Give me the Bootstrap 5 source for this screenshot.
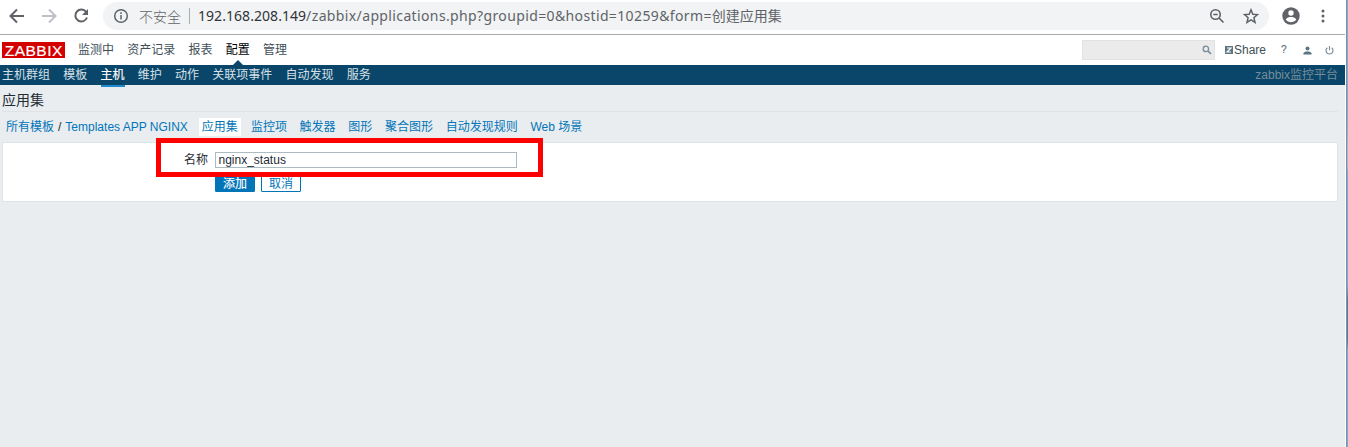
<!DOCTYPE html>
<html lang="zh-CN">
<head>
<meta charset="utf-8">
<title>应用集</title>
<link href="https://cdn.jsdelivr.net/npm/bootstrap@5.3.0/dist/css/bootstrap.min.css" rel="stylesheet">
<style>
body{font:12px/18px "Liberation Sans","Noto Sans CJK SC",sans-serif;color:#1f2c33;background:#fff;height:447px;overflow:hidden}
a{text-decoration:none;color:inherit;white-space:nowrap}
svg{display:block;flex:none}
.desk-edge{width:2px;background:linear-gradient(#8fa8c4 0,#8fa8c4 110px,#b3b3bd 150px,#b3b3bd 168px,#8aa6c8 171px,#8aa6c8 285px,#5c7d96 300px,#5c7d96 340px,#8aa6c8 350px);border-left:1px solid #7592b5}
.chrome-bar{height:35px;border-bottom:1px solid #aaa;padding-top:2px}
.nav-icons{width:103px;height:28px;padding-left:8px;gap:14px}
.omnibox{width:1166px;height:28px;border-radius:14px;background:#f1f3f4;color:#5f6368;font:14px/28px "Noto Sans","Noto Sans CJK SC",sans-serif;padding:0 10px}
.insecure{margin-left:10px;width:42px;font-family:"Noto Sans CJK SC",sans-serif;font-weight:300}
.divider{width:1px;height:16px;background:#aaadb1;margin:0 8px 0 8px}
.url{white-space:nowrap;letter-spacing:.37px}
.url b{font-weight:400;color:#303338;letter-spacing:.05px}
.url i{font-style:normal;letter-spacing:0}
.top-nav{height:30px;padding:0 10px 0 2px;color:#3f4f58}
.brand{width:63px;height:16px;background:#d40000;color:#fff;font-size:15.5px;line-height:17px;letter-spacing:.5px;padding-left:.5px;text-align:center;margin-right:13px;-webkit-text-stroke:.2px #fff}
.menu{gap:13.25px}
.crumbs .menu{gap:12.7px}
.menu .current{color:#000;position:relative}
.top-nav .current::after{content:"";position:absolute;left:7px;bottom:-6px;border:5px solid transparent;border-top:0;border-bottom-color:#0a466a}
.search-box{width:133px;height:20px;background:#ebebeb;border:1px solid #e0e3e5;padding-right:2px}
.sub-nav{height:20px;background:#0a466a;color:#d5e1e8;padding:0 7px 0 2px;line-height:20px}
.sub-nav .current{color:#fff;height:22px;border-bottom:2px solid #1f89ce;-webkit-text-stroke:.15px}
.server{color:#768d99}
.work{background:#e9edf0;padding:0 7px 0 2px}
.page-title{font-size:14px;line-height:20px;height:27px;padding-top:5px;border-bottom:1px solid #dfe4e7;margin:0;font-weight:400}
.crumbs{padding:6px 0 6px 4px;height:30px;color:#0275b8}
.crumbs .active-tab{background:#fff;padding:0 3px;margin:0 10px 0 11px}
.form-box{height:60px;background:#fff;border:1px solid #dfe4e7;padding:8px 0 0 181px}
.field-label{width:31px}
.name-field{width:302px;height:16px;border:1px solid #acbbc2;border-radius:0;padding:0 2.5px;font:12px/14px "Liberation Sans",sans-serif;color:#1f2c33;min-height:0}
.actions{margin:6px 0 0 31px;gap:6px}
.zbtn{width:40px;height:17px;border:1px solid #0275b8;border-radius:1px;padding:1px 0 0;font-size:12px;line-height:14px;color:#0275b8;background:#fff}
.zbtn.main{background:#0275b8;color:#fff;-webkit-text-stroke:.15px}
.marker{position:absolute;left:153px;top:-5px;width:387px;height:39px;border:5px solid #f00}
</style>
</head>
<body>
<div class="d-flex h-100">
<div class="d-flex flex-column" style="width:1345px">
  <div class="chrome-bar d-flex">
    <div class="nav-icons d-flex align-items-center">
      <svg width="18" height="18" viewBox="0 0 18 18" fill="none" stroke="#5f6368" stroke-width="2"><path d="M16 9H3M9 2.5 2.5 9 9 15.500"/></svg>
      <svg width="18" height="18" viewBox="0 0 18 18" fill="none" stroke="#bdc1c6" stroke-width="2"><path d="M2 9h13M9 2.500 15.500 9 9 15.500"/></svg>
      <svg width="18" height="18" viewBox="0 0 18 18"><path d="M14.200 5A6 6 0 1 0 15 10.500" fill="none" stroke="#5f6368" stroke-width="2"/><path d="M16 2v6h-6z" fill="#5f6368"/></svg>
    </div>
    <div class="omnibox d-flex align-items-center">
      <svg width="16" height="16" viewBox="0 0 16 16" fill="none" stroke="#5f6368" stroke-width="1.500"><circle cx="8" cy="8" r="6.300"/><path d="M8 7v4.500M8 4.300v1.600"/></svg>
      <span class="insecure">不安全</span><span class="divider"></span>
      <span class="url"><b>192.168.208.149</b>/zabbix/applications.php?groupid=0&amp;hostid=10259&amp;form=<i>创建应用集</i></span>
      <div class="d-flex ms-auto" style="gap:18px">
        <svg width="16" height="16" viewBox="0 0 16 16" fill="none" stroke="#5f6368" stroke-width="1.600"><circle cx="6.500" cy="6.500" r="4.700"/><path d="M10 10l4.500 4.500M4.300 6.500h4.400"/></svg>
        <svg width="16" height="16" viewBox="0 0 16 16" fill="none" stroke="#5f6368" stroke-width="1.500"><path d="M8 1.800l1.800 4.400 4.700.4-3.600 3.100 1.100 4.600L8 11.800l-4 2.500 1.100-4.600-3.600-3.100 4.700-.4z"/></svg>
      </div>
    </div>
    <div class="d-flex align-items-center" style="height:28px;margin-left:13px;gap:15px">
      <svg width="18" height="18" viewBox="0 0 18 18"><circle cx="9" cy="9" r="8.700" fill="#5f6368"/><circle cx="9" cy="6" r="2.700" fill="#fff"/><path d="M3.700 12.500C5 10.500 7 10.100 9 10.100s4 .4 5.300 2.400C13 14.300 11 15.300 9 15.300s-4-1-5.300-2.800z" fill="#fff"/></svg>
      <svg width="16" height="16" viewBox="0 0 16 16" fill="#5f6368"><circle cx="8" cy="3" r="1.500"/><circle cx="8" cy="8" r="1.500"/><circle cx="8" cy="13" r="1.500"/></svg>
    </div>
  </div>
  <nav class="top-nav d-flex align-items-center">
    <a class="brand" href="#">ZABBIX</a>
    <div class="menu d-flex"><a href="#">监测中</a><a href="#">资产记录</a><a href="#">报表</a><a class="current" href="#">配置</a><a href="#">管理</a></div>
    <div class="search-box ms-auto d-flex align-items-center justify-content-end">
      <svg width="10" height="10" viewBox="0 0 10 10" fill="none" stroke="#768d99" stroke-width="1.300"><circle cx="3.900" cy="3.900" r="2.700"/><path d="M5.900 5.900 9 9" stroke-width="1.700"/></svg>
    </div>
    <a class="d-flex align-items-center" href="#" style="margin-left:10px;gap:1px"><svg width="8" height="8" viewBox="0 0 8 8"><path d="M0 0h8v8H0z" fill="#5c7583"/><path d="M2 2h4L2 6h4" fill="none" stroke="#fff" stroke-width="1.200"/></svg>Share</a>
    <a href="#" style="width:7px;margin-left:15px;color:#5c7583;font-size:10px;-webkit-text-stroke:.2px">?</a>
    <svg style="margin-left:15px" width="9" height="9" viewBox="0 0 9 9" fill="#5c7583"><circle cx="4.500" cy="2.500" r="2"/><path d="M.5 8.500V7.200C1 5.700 3 5.400 4.500 5.400s3.500.3 4 1.800v1.300z"/></svg>
    <svg style="margin:0 1px 0 13px" width="9" height="9" viewBox="0 0 9 9" fill="none" stroke="#768d99" stroke-width="1.100"><path d="M2.300 1.800a3.500 3.500 0 1 0 4.400 0M4.500 0v4.300"/></svg>
  </nav>
  <nav class="sub-nav d-flex">
    <div class="menu d-flex"><a href="#">主机群组</a><a href="#">模板</a><a class="current" href="#">主机</a><a href="#">维护</a><a href="#">动作</a><a href="#">关联项事件</a><a href="#">自动发现</a><a href="#">服务</a></div>
    <span class="server ms-auto">zabbix监控平台</span>
  </nav>
  <main class="work flex-grow-1">
    <h1 class="page-title">应用集</h1>
    <div class="crumbs d-flex">
      <a href="#">所有模板</a><span class="text-dark" style="margin:0 4px">/</span><a href="#">Templates APP NGINX</a>
      <a class="active-tab" href="#">应用集</a>
      <div class="menu d-flex"><a href="#">监控项</a><a href="#">触发器</a><a href="#">图形</a><a href="#">聚合图形</a><a href="#">自动发现规则</a><a href="#">Web 场景</a></div>
    </div>
    <form class="form-box position-relative">
      <div class="d-flex align-items-center"><label class="field-label" for="appname">名称</label><input class="form-control name-field" id="appname" type="text" value="nginx_status"></div>
      <div class="actions d-flex"><button class="btn zbtn main" type="button">添加</button><button class="btn zbtn" type="button">取消</button></div>
      <div class="marker"></div>
    </form>
  </main>
</div>
<div class="desk-edge ms-auto"></div>
</div>
</body>
</html>
